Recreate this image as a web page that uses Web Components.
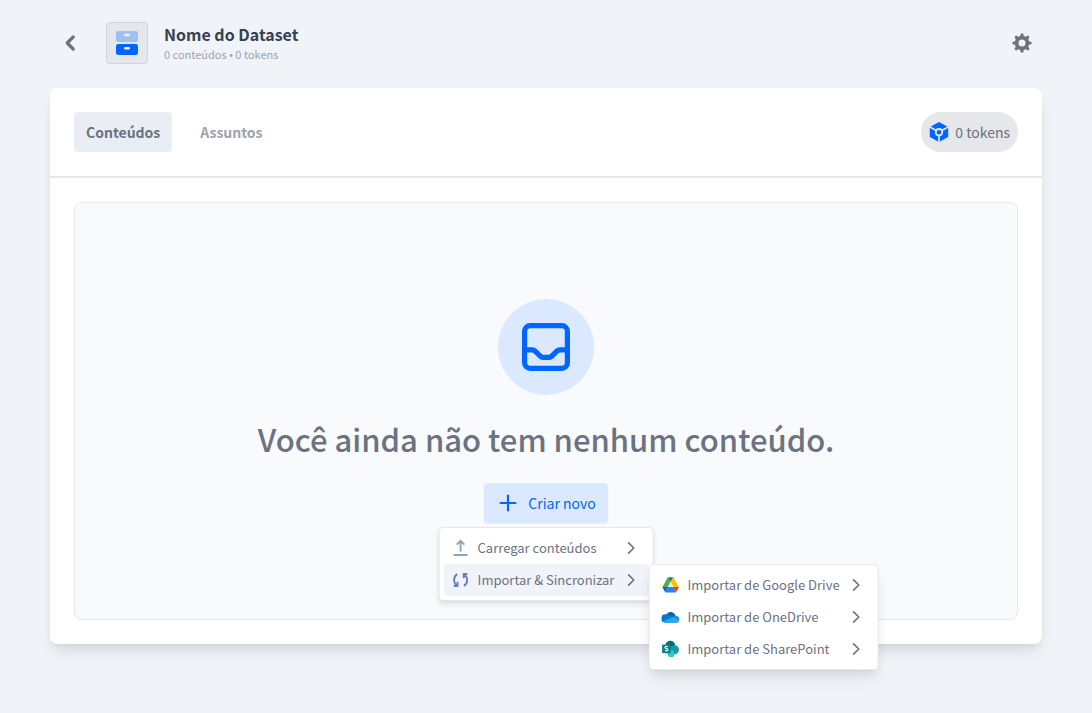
<!DOCTYPE html>
<html lang="pt-BR">
<head>
<meta charset="utf-8">
<meta name="viewport" content="width=device-width, initial-scale=1">
<title>Nome do Dataset</title>
<style>
    :root {
        --azul: #0066ff;
        --azul-claro: #dbe9ff;
        --fundo: #f0f4f9;
        --borda: #e5e7eb;
        --texto: #6b7280;
        --texto-claro: #9ca3af;
    }
    body {
        margin: 0;
        background: var(--fundo);
        color: var(--texto);
        font: 14px/24px "Noto Sans CJK JP", "Noto Sans", sans-serif;
    }
</style>
</head>
<body>
<pagina-dataset>
    <cabecalho-dataset slot="cabecalho" nome="Nome do Dataset" resumo="0 conteúdos • 0 tokens"></cabecalho-dataset>
    <aba-conteudo slot="abas" ativa>Conteúdos</aba-conteudo>
    <aba-conteudo slot="abas">Assuntos</aba-conteudo>
    <contador-tokens slot="contador">0 tokens</contador-tokens>
    <estado-vazio>
        <span slot="titulo">Você ainda não tem nenhum conteúdo.</span>
        <botao-criar slot="acao" texto="Criar novo">
            <menu-opcoes>
                <item-menu icone="carregar">Carregar conteúdos</item-menu>
                <item-menu icone="sincronizar" ativo>
                    Importar &amp; Sincronizar
                    <menu-opcoes slot="submenu">
                        <item-menu icone="drive">Importar de Google Drive</item-menu>
                        <item-menu icone="onedrive">Importar de OneDrive</item-menu>
                        <item-menu icone="sharepoint">Importar de SharePoint</item-menu>
                    </menu-opcoes>
                </item-menu>
            </menu-opcoes>
        </botao-criar>
    </estado-vazio>
</pagina-dataset>

<script>
const icones = {
    voltar: `<svg viewBox="0 0 20 20"><path d="M13.2 4 7.2 10l6 6" fill="none" stroke="currentColor" stroke-width="3.2" stroke-linecap="round" stroke-linejoin="round"/></svg>`,
    engrenagem: `<svg viewBox="0 0 20 20"><g fill="none" stroke="currentColor"><circle cx="10" cy="10" r="5.4" stroke-width="3.8"/><path d="M10 1.9v2M10 16.1v2M1.9 10h2M16.1 10h2M4.3 4.3l1.3 1.3M14.4 14.4l1.3 1.3M4.3 15.7l1.3-1.3M14.4 5.6l1.3-1.3" stroke-width="3.2" stroke-linecap="round"/></g></svg>`,
    arquivo: `<svg viewBox="0 0 24 24"><rect x="1" y="0" width="22" height="11" rx="2.2" fill="#a0c0f4"/><rect x="1" y="13" width="22" height="11" rx="2.2" fill="#0066ff"/><path d="M10.2 4h3.6M10.2 17.2h3.6" stroke="#e9eef7" stroke-width="2.4" stroke-linecap="round"/></svg>`,
    tokens: `<svg viewBox="0 0 20 20"><path fill="#0066ff" d="M10 0 19.2 5.1v9.8L10 20 .8 14.9V5.1Z"/><path d="M.4 4.8 10 10l9.6-5.2M10 10v11" fill="none" stroke="#e5e7eb" stroke-width="1.7"/><circle cx="10" cy="10.2" r="3.2" fill="#0066ff" stroke="#e5e7eb" stroke-width="1.8"/></svg>`,
    caixa: `<svg viewBox="0 0 48 48"><g fill="none" stroke="currentColor" stroke-width="5.2" stroke-linejoin="round"><rect x="2.6" y="2.6" width="42.8" height="42.8" rx="5.6"/><path d="M2.6 26.8h7.6c1.2 0 2.2.5 3 1.3l5 5c.8.9 1.6 1.3 2.8 1.3h6c1.2 0 2-.4 2.8-1.3l5-5c.8-.8 1.8-1.3 3-1.3h7.6"/></g></svg>`,
    mais: `<svg viewBox="0 0 20 20"><path d="M10 2.6v14.8M2.6 10h14.8" stroke="currentColor" stroke-width="2.2" stroke-linecap="round"/></svg>`,
    carregar: `<svg viewBox="0 0 18 18"><path d="M9 12.8V2.4M5.2 5.600 9 1.800l3.800 3.800M2 16h14" fill="none" stroke="#94a3b8" stroke-width="1.900"/></svg>`,
    sincronizar: `<svg viewBox="0 0 18 18"><g fill="none" stroke="#6d7bc0" stroke-width="1.9"><path d="M5.600 3.100C1.500 5.800 1.500 11.300 5.100 14.400M2.200 15h3.700v-4.200M12.400 14.900c4.100-2.700 4.100-8.200.5-11.300M15.800 3h-3.700v4.200"/></g></svg>`,
    seta: `<svg viewBox="0 0 18 18"><path d="M6 3.900 11.200 9 6 14.100" fill="none" stroke="currentColor" stroke-width="1.600" stroke-linecap="round" stroke-linejoin="round"/></svg>`,
    drive: `<svg viewBox="0 0 18 18"><path fill="#4caf50" d="M6.200 1.200 9 6.100 3.800 15.300.8 11Z"/><path fill="#2e7d32" d="M6.200 1.200h5.600L9 6.100Z"/><path fill="#ffc107" d="M11.800 1.200 17.300 11h-5.500L9 6.100Z"/><path fill="#1e88e5" d="M6.200 11h5.600l2.500 5.600H3.700Z"/><path fill="#1565c0" d="M.8 11h5.400l-2.500 5.600Z"/><path fill="#f03a26" d="M11.800 11h5.500l-3 5.600Z"/><path fill="#fff" d="m9 6.100 2.800 4.900H6.200Z"/></svg>`,
    onedrive: `<svg viewBox="0 0 18 18"><path fill="#0364b8" d="M4.500 6.700a5.100 5.100 0 0 1 9.400 1.100L10.500 11Z"/><path fill="#0078d4" d="M4.700 6.500c1.700-.4 3 .2 4 .9L12 9.500 1 14.100A4.300 4.300 0 0 1 4.700 6.500Z"/><path fill="#1490df" d="M11 9.200c1-1 2.100-1.500 3.300-1.400a3.700 3.700 0 0 1 3.100 5.500Z"/><path fill="#28a8ea" d="m1 13.700 9.900-4.500 6.700 4.100c-.7 1.100-1.600 1.700-2.900 1.700H4.300c-1.500 0-2.500-.4-3.300-1.300Z"/></svg>`,
    sharepoint: `<svg viewBox="0 0 18 18"><circle cx="8.700" cy="5.700" r="4.900" fill="#036c70"/><circle cx="12.900" cy="9.700" r="4.500" fill="#1a9ba1"/><circle cx="9.500" cy="13.800" r="3.500" fill="#37c6d0"/><rect x=".5" y="4.500" width="8.500" height="8.800" rx=".8" fill="#038387"/><path d="M6.300 6.800c-1.100-.7-2.900-.4-2.900.7 0 1.400 3 .8 3 2.300 0 1.200-1.900 1.500-3.100.8" fill="none" stroke="#fff" stroke-width="1.200"/></svg>`
};

class IconeUi extends HTMLElement {
    connectedCallback() {
        if (this.shadowRoot) return;
        this.attachShadow({mode: "open"});
        this.shadowRoot.innerHTML = `
            <style>
                :host {
                    display: block;
                    flex: none;
                    width: 20px;
                    height: 20px;
                }
                svg {
                    display: block;
                    width: 100%;
                    height: 100%;
                }
            </style>
            ${icones[this.getAttribute("nome")]}
        `;
        this.setAttribute("aria-hidden", "true");
    }
}

class PaginaDataset extends HTMLElement {
    constructor() {
        super();
        this.attachShadow({mode: "open"});
        this.shadowRoot.innerHTML = `
            <style>
                :host {
                    display: block;
                    padding: 22px 50px 68px;
                }
                main {
                    margin-top: 24px;
                    background: #fff;
                    border-radius: 8px;
                    box-shadow: 0 10px 15px -3px rgba(0, 0, 0, .1), 0 4px 6px -2px rgba(0, 0, 0, .05);
                }
                .topo {
                    display: flex;
                    align-items: center;
                    justify-content: space-between;
                    padding: 24px;
                    border-bottom: 2px solid var(--borda);
                }
                nav {
                    display: flex;
                    gap: 16px;
                }
                .corpo {
                    padding: 24px;
                }
            </style>
            <slot name="cabecalho"></slot>
            <main>
                <div class="topo">
                    <nav><slot name="abas"></slot></nav>
                    <slot name="contador"></slot>
                </div>
                <div class="corpo"><slot></slot></div>
            </main>
        `;
    }
}

class CabecalhoDataset extends HTMLElement {
    connectedCallback() {
        if (this.shadowRoot) return;
        this.attachShadow({mode: "open"});
        this.shadowRoot.innerHTML = `
            <style>
                :host {
                    display: block;
                }
                header {
                    display: flex;
                    align-items: center;
                    gap: 16px;
                }
                button {
                    display: grid;
                    place-items: center;
                    width: 40px;
                    height: 40px;
                    padding: 0;
                    border: 0;
                    background: none;
                    color: var(--texto);
                    cursor: pointer;
                }
                .logo {
                    display: grid;
                    place-items: center;
                    width: 40px;
                    height: 40px;
                    border: 1px solid #d1d5db;
                    border-radius: 4px;
                    background: var(--borda);
                }
                .logo icone-ui {
                    width: 24px;
                    height: 24px;
                }
                .nomes {
                    flex: 1;
                }
                h1, p {
                    margin: 0;
                }
                h1 {
                    color: #374151;
                    font-size: 16px;
                    font-weight: 700;
                    line-height: 24px;
                }
                p {
                    color: var(--texto-claro);
                    font-size: 11px;
                    line-height: 16px;
                    padding-bottom: 2px;
                }
            </style>
            <header>
                <button type="button" aria-label="Voltar"><icone-ui nome="voltar"></icone-ui></button>
                <div class="logo"><icone-ui nome="arquivo"></icone-ui></div>
                <div class="nomes">
                    <h1>${this.getAttribute("nome")}</h1>
                    <p>${this.getAttribute("resumo")}</p>
                </div>
                <button type="button" aria-label="Configurações"><icone-ui nome="engrenagem"></icone-ui></button>
            </header>
        `;
    }
}

class AbaConteudo extends HTMLElement {
    constructor() {
        super();
        this.attachShadow({mode: "open"});
        this.shadowRoot.innerHTML = `
            <style>
                :host {
                    display: block;
                }
                button {
                    height: 40px;
                    padding: 0 12px;
                    border: 0;
                    border-radius: 4px;
                    background: none;
                    color: var(--texto-claro);
                    font: inherit;
                    font-weight: 700;
                    cursor: pointer;
                }
                :host([ativa]) button {
                    background: #e9eef5;
                    color: var(--texto);
                }
            </style>
            <button type="button"><slot></slot></button>
        `;
    }
}

class ContadorTokens extends HTMLElement {
    constructor() {
        super();
        this.attachShadow({mode: "open"});
        this.shadowRoot.innerHTML = `
            <style>
                :host {
                    display: flex;
                    align-items: center;
                    gap: 6px;
                    height: 40px;
                    padding: 0 8px;
                    border-radius: 20px;
                    background: var(--borda);
                }
            </style>
            <icone-ui nome="tokens"></icone-ui>
            <slot></slot>
        `;
    }
}

class EstadoVazio extends HTMLElement {
    constructor() {
        super();
        this.attachShadow({mode: "open"});
        this.shadowRoot.innerHTML = `
            <style>
                :host {
                    display: flex;
                    flex-direction: column;
                    align-items: center;
                    gap: 24px;
                    padding: 96px 24px;
                    border: 1px solid var(--borda);
                    border-radius: 8px;
                    background: #f9fafc;
                }
                .circulo {
                    display: grid;
                    place-items: center;
                    width: 96px;
                    height: 96px;
                    border-radius: 50%;
                    background: var(--azul-claro);
                    color: var(--azul);
                }
                .circulo icone-ui {
                    width: 48px;
                    height: 48px;
                }
                h2 {
                    margin: 0;
                    font-size: 31px;
                    font-weight: 500;
                    line-height: 40px;
                    text-align: center;
                }
            </style>
            <div class="circulo"><icone-ui nome="caixa"></icone-ui></div>
            <h2><slot name="titulo"></slot></h2>
            <slot name="acao"></slot>
        `;
    }
}

class BotaoCriar extends HTMLElement {
    connectedCallback() {
        if (this.shadowRoot) return;
        this.attachShadow({mode: "open"});
        this.shadowRoot.innerHTML = `
            <style>
                :host {
                    display: block;
                    position: relative;
                }
                button {
                    display: flex;
                    align-items: center;
                    gap: 8px;
                    height: 40px;
                    padding: 0 12px;
                    border: 0;
                    border-radius: 4px;
                    background: var(--azul-claro);
                    box-shadow: 0 1px 2px rgba(0, 0, 0, .05);
                    color: var(--azul);
                    font: inherit;
                    cursor: pointer;
                }
                .icone {
                    display: grid;
                    place-items: center;
                    width: 24px;
                }
                /* o menu abre centralizado logo abaixo do botão */
                .menu {
                    position: absolute;
                    top: calc(100% + 4px);
                    left: 50%;
                    transform: translateX(-50%);
                }
            </style>
            <button type="button" aria-haspopup="menu" aria-expanded="true">
                <span class="icone"><icone-ui nome="mais"></icone-ui></span>
                ${this.getAttribute("texto")}
            </button>
            <div class="menu"><slot></slot></div>
        `;
    }
}

class MenuOpcoes extends HTMLElement {
    constructor() {
        super();
        this.attachShadow({mode: "open"});
        this.shadowRoot.innerHTML = `
            <style>
                :host {
                    display: block;
                    width: max-content;
                    padding: 4px;
                    border: 1px solid var(--borda);
                    border-radius: 4px;
                    background: #fff;
                    box-shadow: 0 4px 6px -1px rgba(0, 0, 0, .1), 0 2px 4px -1px rgba(0, 0, 0, .06);
                }
                :host([slot="submenu"]) {
                    box-shadow: 0 10px 15px -3px rgba(0, 0, 0, .1), 0 4px 6px -2px rgba(0, 0, 0, .05);
                }
            </style>
            <div role="menu"><slot></slot></div>
        `;
    }
}

class ItemMenu extends HTMLElement {
    connectedCallback() {
        if (this.shadowRoot) return;
        this.attachShadow({mode: "open"});
        this.shadowRoot.innerHTML = `
            <style>
                :host {
                    display: block;
                    position: relative;
                }
                button {
                    display: flex;
                    align-items: center;
                    gap: 8px;
                    width: 100%;
                    height: 32px;
                    padding: 0 8px;
                    border: 0;
                    border-radius: 4px;
                    background: none;
                    color: var(--texto);
                    font: inherit;
                    font-size: 13px;
                    text-align: left;
                    cursor: pointer;
                }
                :host([ativo]) button {
                    background: var(--fundo);
                }
                icone-ui {
                    width: 18px;
                    height: 18px;
                }
                .texto {
                    flex: 1;
                }
                .submenu {
                    position: absolute;
                    top: 0;
                    left: 100%;
                    z-index: 1;
                }
            </style>
            <button type="button" role="menuitem">
                <icone-ui nome="${this.getAttribute("icone")}"></icone-ui>
                <span class="texto"><slot></slot></span>
                <icone-ui nome="seta"></icone-ui>
            </button>
            <div class="submenu"><slot name="submenu"></slot></div>
        `;
    }
}

customElements.define("icone-ui", IconeUi);
customElements.define("pagina-dataset", PaginaDataset);
customElements.define("cabecalho-dataset", CabecalhoDataset);
customElements.define("aba-conteudo", AbaConteudo);
customElements.define("contador-tokens", ContadorTokens);
customElements.define("estado-vazio", EstadoVazio);
customElements.define("botao-criar", BotaoCriar);
customElements.define("menu-opcoes", MenuOpcoes);
customElements.define("item-menu", ItemMenu);
</script>
</body>
</html>
